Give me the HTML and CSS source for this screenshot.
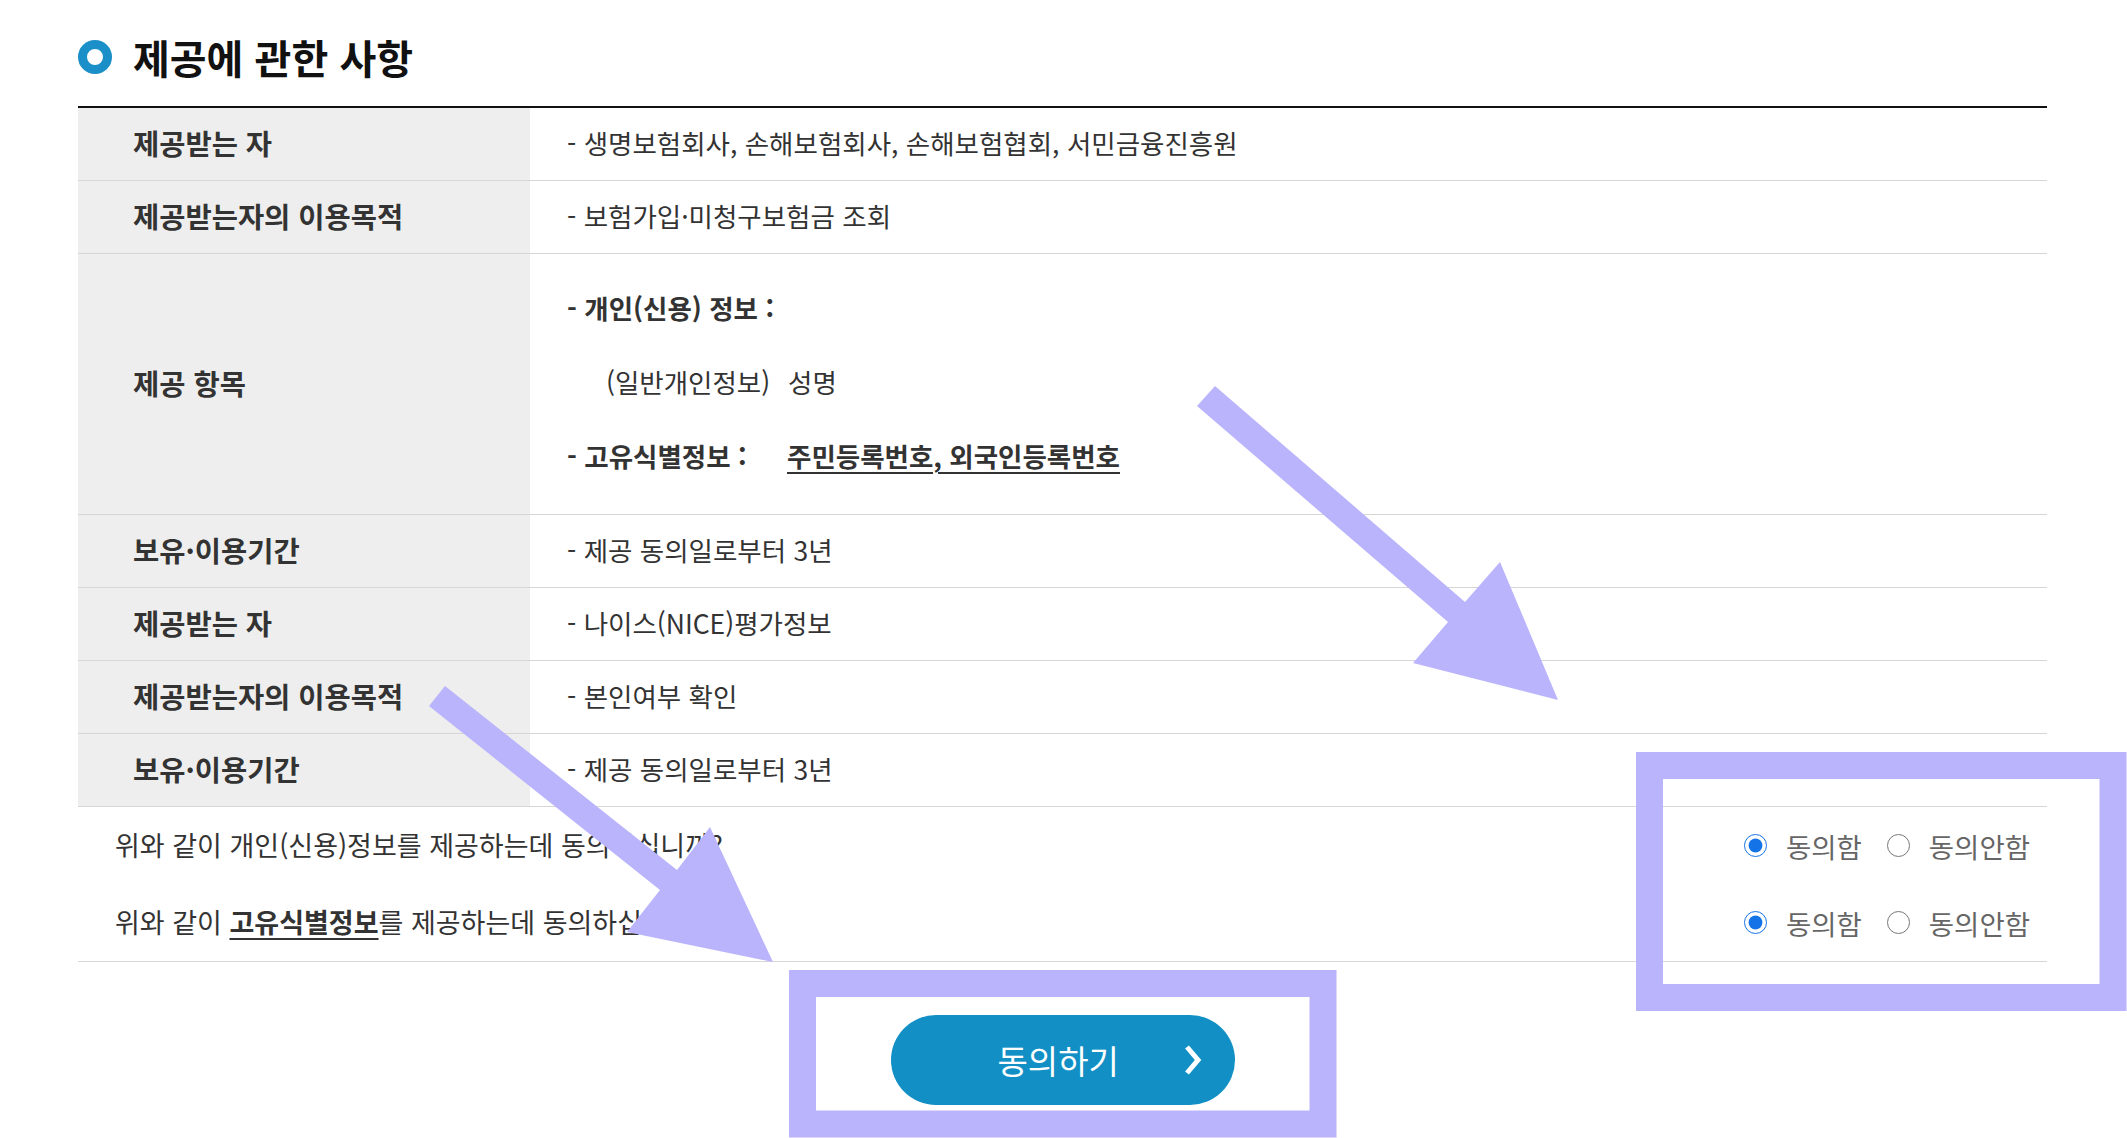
FILE: index.html
```html
<!DOCTYPE html>
<html lang="ko">
<head>
    <meta charset="UTF-8">
    <meta name="viewport" content="width=device-width, initial-scale=1.0">
    <title>제공에 관한 사항</title>
    <link rel="stylesheet" href="styles.css">
</head>
<body>
    <div class="page">
        <h2 class="sec-title">
            <svg class="title-icon" width="34" height="34" viewBox="0 0 34 34">
                <circle cx="17" cy="17" r="12.5" fill="none" stroke="#1b8fc7" stroke-width="9"/>
            </svg>
            제공에 관한 사항
        </h2>

        <div class="info-table">
            <div class="row">
                <div class="th">제공받는 자</div>
                <div class="td">- 생명보험회사, 손해보험회사, 손해보험협회, 서민금융진흥원</div>
            </div>
            <div class="row">
                <div class="th">제공받는자의 이용목적</div>
                <div class="td">- 보험가입·미청구보험금 조회</div>
            </div>
            <div class="row">
                <div class="th">제공 항목</div>
                <div class="td">
                    <div class="item-list">
                        <p class="item-line strong">- 개인(신용) 정보 :</p>
                        <p class="item-line"><span class="sub-key">(일반개인정보)</span>성명</p>
                        <p class="item-line strong"><span class="id-key">- 고유식별정보 :</span><u class="id-val">주민등록번호, 외국인등록번호</u></p>
                    </div>
                </div>
            </div>
            <div class="row">
                <div class="th">보유·이용기간</div>
                <div class="td">- 제공 동의일로부터 3년</div>
            </div>
            <div class="row">
                <div class="th">제공받는 자</div>
                <div class="td">- 나이스(NICE)평가정보</div>
            </div>
            <div class="row">
                <div class="th">제공받는자의 이용목적</div>
                <div class="td">- 본인여부 확인</div>
            </div>
            <div class="row">
                <div class="th">보유·이용기간</div>
                <div class="td">- 제공 동의일로부터 3년</div>
            </div>
        </div>

        <!-- 동의 여부 -->
        <div class="agree-box">
            <div class="agree-row">
                <p class="agree-q">위와 같이 개인(신용)정보를 제공하는데 동의하십니까?</p>
                <div class="radio-group">
                    <label><input type="radio" name="agree1" checked>동의함</label>
                    <label><input type="radio" name="agree1">동의안함</label>
                </div>
            </div>
            <div class="agree-row">
                <p class="agree-q">위와 같이 <u class="strong">고유식별정보</u>를 제공하는데 동의하십니까?</p>
                <div class="radio-group">
                    <label><input type="radio" name="agree2" checked>동의함</label>
                    <label><input type="radio" name="agree2">동의안함</label>
                </div>
            </div>
        </div>

        <div class="btn-area">
            <button class="btn-agree" type="button">
                동의하기
                <svg class="btn-arrow" width="20" height="32" viewBox="0 0 20 32">
                    <polyline points="4,3 15,16 4,29" fill="none" stroke="#fff" stroke-width="5"/>
                </svg>
            </button>
        </div>
    </div>

    <!-- guide marks drawn over the page -->
    <svg class="annot" width="2127" height="1138" viewBox="0 0 2127 1138">
        <polygon points="1215,386 1465,602 1500,562 1558,700 1413,663 1448,622 1197,406" fill="#bab4fc"/>
        <polygon points="445,686 677,870 710,827 773,962 627,932 660,890 429,706" fill="#bab4fc"/>
        <rect x="1649.5" y="765.5" width="463.5" height="232" fill="none" stroke="#bab4fc" stroke-width="27"/>
        <rect x="802.5" y="983.5" width="520.5" height="140.5" fill="none" stroke="#bab4fc" stroke-width="27"/>
    </svg>
</body>
</html>
```

FILE: styles.css
```css
html, body {
    margin: 0;
    padding: 0;
    background-color: #fff;
}

body {
    font-family: "Noto Sans CJK KR", "Malgun Gothic", sans-serif;
    color: #333;
    overflow: hidden;
}

.page {
    padding: 0 80px 0 78px;
}

.sec-title {
    display: flex;
    align-items: center;
    gap: 21px;
    height: 98px;
    margin: 0;
    padding-top: 8px;
    font-size: 40px;
    font-weight: bold;
    color: #111;
}

.title-icon {
    flex-shrink: 0;
}

.info-table {
    border-top: 2px solid #111;
}

.row {
    display: grid;
    grid-template-columns: 452px 1fr;
    border-bottom: 1px solid #d6d6d6;
}

.th,
.td {
    box-sizing: border-box;
    display: flex;
    align-items: center;
    min-height: 72px;
    padding-bottom: 4px;
}

.th {
    padding-left: 55px;
    background-color: #eeeeee;
    font-size: 28.5px;
    font-weight: bold;
    color: #333;
}

.td {
    padding-left: 37px;
    font-size: 26.5px;
    color: #333;
}

.item-list {
    padding: 17px 0;
}

.item-line {
    margin: 0;
    line-height: 74px;
    white-space: nowrap;
}

.strong {
    font-weight: bold;
}

.sub-key {
    display: inline-block;
    width: 182px;
    margin-left: 39px;
}

.id-key {
    display: inline-block;
    width: 220px;
}

.id-val,
.agree-q u {
    text-decoration-thickness: 2px;
    text-underline-offset: 5px;
}

.agree-box {
    border-bottom: 1px solid #d6d6d6;
}

.agree-row {
    display: flex;
    justify-content: space-between;
    align-items: center;
    height: 77px;
    padding: 0 17px 0 37px;
}

.agree-q {
    margin: 0 0 2px;
    font-size: 27px;
    color: #333;
}

.radio-group {
    display: flex;
    align-items: center;
    gap: 25px;
}

.radio-group label {
    display: flex;
    align-items: center;
    gap: 19px;
    font-size: 27.5px;
    color: #666;
}

.radio-group input {
    width: 23px;
    height: 23px;
    margin: 0;
    accent-color: #1473e6;
}

.btn-area {
    display: flex;
    justify-content: center;
    padding-top: 53px;
}

.btn-agree {
    display: flex;
    align-items: center;
    width: 344px;
    height: 90px;
    padding: 0 32px 0 107px;
    border: none;
    border-radius: 45px;
    background-color: #1290c6;
    color: #fff;
    font-family: inherit;
    font-size: 33px;
    cursor: pointer;
}

.btn-arrow {
    margin-left: auto;
}

.annot {
    position: absolute;
    top: 0;
    left: 0;
    pointer-events: none;
}
```
